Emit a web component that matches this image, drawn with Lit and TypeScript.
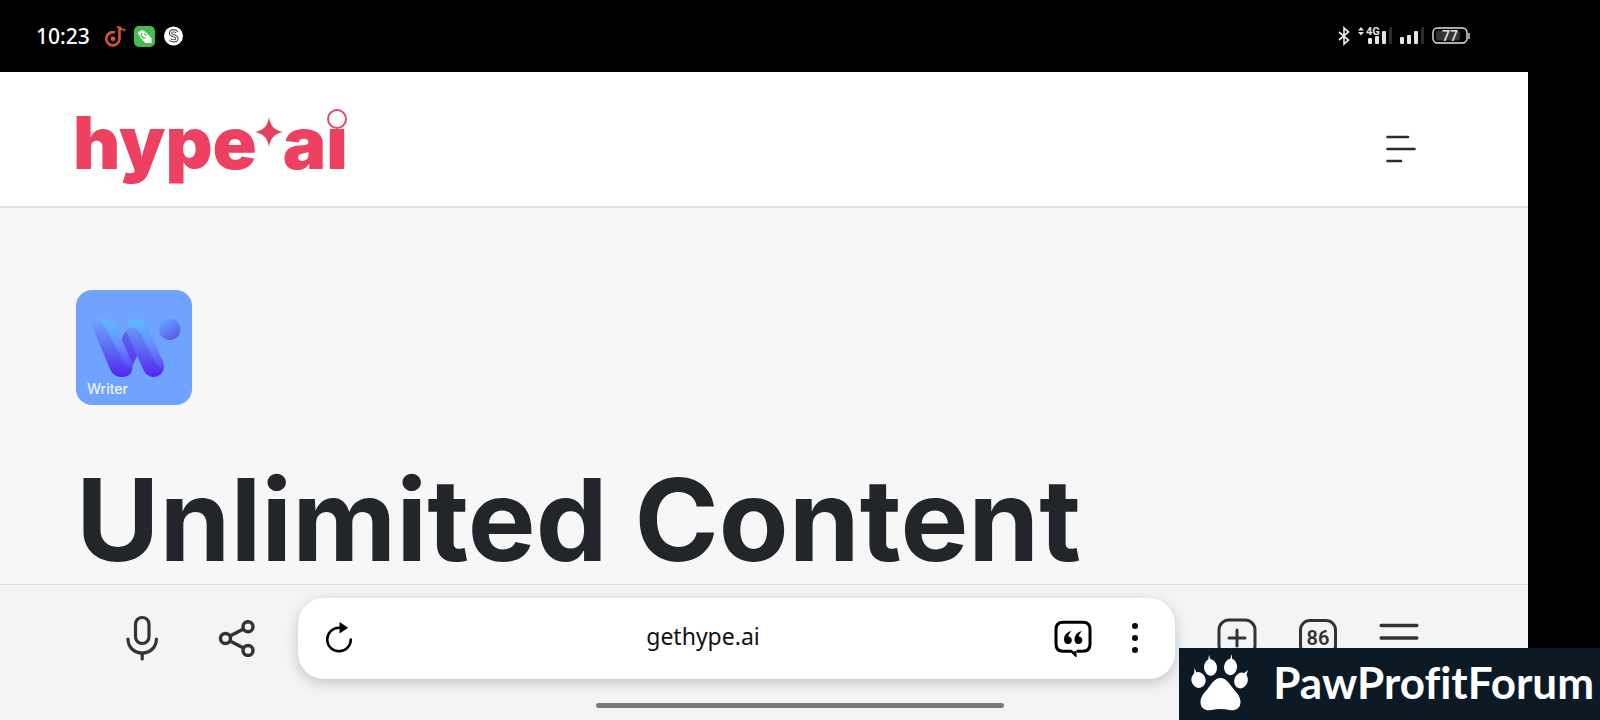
import { LitElement, html, css, svg } from "lit";
import { customElement, property } from "lit/decorators.js";

@customElement("status-bar")
class StatusBar extends LitElement {
  @property() time = "10:23";
  @property({ type: Number }) battery = 77;

  static styles = css`
    :host {
      display: flex;
      align-items: center;
      justify-content: space-between;
      height: 72px;
      padding: 0 57px 0 36px;
      color: #fff;
      background: #000;
      font-family: "Noto Sans", sans-serif;
    }
    .group {
      display: flex;
      align-items: center;
      gap: 8px;
    }
    .time {
      font-size: 21px;
      font-weight: 500;
      line-height: 28px;
      margin-right: 7px;
    }
    svg {
      display: block;
    }
    .net {
      font: 700 11px Roboto, sans-serif;
    }
    .level {
      font: 500 14px Roboto, sans-serif;
    }
  `;

  render() {
    return html`
      <div class="group">
        <time class="time">${this.time}</time>
        <svg width="21" height="22" viewBox="0 0 21 22" aria-hidden="true">
          <path d="M10 7.500A6.600 6.600 0 1 0 14.500 14V3" fill="none" stroke="#d9552f" stroke-width="2.600" />
          <circle cx="8" cy="13.800" r="2.400" fill="#d9552f" />
          <path d="M11 1l5 .8 1 1.700 3.600.7-.6 2.800-1-1.400-4.500-.6z" fill="#d9552f" />
        </svg>
        <svg width="21" height="21" viewBox="0 0 21 21" aria-hidden="true">
          <rect width="21" height="21" rx="5" fill="#46bb50" />
          <path d="M3.500 6.500 8 4l3 1.500 3.500 3.500 3 3.500v4.500h-6l-4.500-4.500z" fill="#fff" />
          <path d="M8 7l-1 2.500 2.500 2.500 2.500-.5M10 7.500l2.500 2" stroke="#46bb50" stroke-width="1.200" fill="none" />
        </svg>
        <svg width="21" height="20" viewBox="0 0 21 20" aria-hidden="true">
          <circle cx="10.500" cy="10" r="9.500" fill="#fff" />
          <path
            d="M14 6.500C12.500 4 7.500 4.200 7.500 7.200c0 3 6.500 2 6.500 5.300 0 3-5.500 3.200-7 .8"
            fill="none" stroke="#222" stroke-width="3" />
          <path
            d="M14.500 6.800C12.500 4 7.500 4.200 7.500 7.200c0 3 6.500 2 6.500 5.300 0 3-5.500 3.200-7.500.5"
            fill="none" stroke="#fff" stroke-width="1.300" />
        </svg>
      </div>
      <div class="group">
        <svg width="12" height="20" viewBox="0 0 12 20" aria-hidden="true">
          <path d="M1 6l9.500 8L6 18V2l4.500 4L1 14" fill="none" stroke="#e4e4e4" stroke-width="1.700" />
        </svg>
        <svg width="34" height="20" viewBox="0 0 34 20" aria-label="4G">
          <path d="M0 4.500l3-3.500 3 3.500zM0 6l3 3.500L6 6z" fill="#e4e4e4" />
          <rect x="10" y="12" width="4" height="6" rx="1" fill="#e4e4e4" />
          <rect x="17" y="10" width="4" height="8" rx="1" fill="#e4e4e4" />
          <rect x="24" y="5" width="4" height="13" rx="1" fill="#e4e4e4" />
          <rect x="31" y="1" width="3" height="17" rx="1" fill="#2c2c2c" />
          <text class="net" x="8" y="9" fill="#e4e4e4">4G</text>
        </svg>
        <svg width="24" height="20" viewBox="0 0 24 20" aria-hidden="true">
          <rect x="0" y="11" width="4" height="7" rx="1" fill="#e4e4e4" />
          <rect x="7" y="9" width="4" height="9" rx="1" fill="#e4e4e4" />
          <rect x="14" y="5" width="4" height="13" rx="1" fill="#e4e4e4" />
          <rect x="21" y="1" width="3" height="17" rx="1" fill="#2c2c2c" />
        </svg>
        <svg width="39" height="18" viewBox="0 0 39 18" aria-label="Battery">
          <rect x="1" y="1" width="34" height="15" rx="4.500" fill="none" stroke="#e4e4e4" stroke-width="1.400" />
          <rect x="4" y="3.500" width="24" height="10" rx="2" fill="#333" />
          <rect x="36" y="6" width="2" height="6" fill="#9a9a9a" />
          <text class="level" x="18" y="13.500" text-anchor="middle" fill="#e4e4e4">${this.battery}</text>
        </svg>
      </div>
    `;
  }
}

@customElement("site-header")
class SiteHeader extends LitElement {
  static styles = css`
    :host {
      display: flex;
      justify-content: space-between;
      align-items: flex-end;
      padding: 33px 112px 26px 73px;
      background: #fff;
      border-bottom: 2px solid #e2e2e2;
    }
    .logo {
      display: flex;
      color: #ee4060;
      text-decoration: none;
      font: 900 73px/75px Inter, sans-serif;
    }
    .star {
      margin: 12px 0 0 -2px;
    }
    .i {
      position: relative;
    }
    .ring {
      position: absolute;
      top: 4px;
      left: 50%;
      width: 16px;
      height: 16px;
      margin-left: -10px;
      border: 2px solid #dc4a66;
      border-radius: 50%;
      background: #fff;
    }
    .menu {
      padding: 16px 0;
      border: 0;
      background: none;
    }
    svg {
      display: block;
    }
  `;

  render() {
    return html`
      <a class="logo" href="#" aria-label="hype ai">
        <span>hype</span>
        <svg class="star" width="28" height="30" viewBox="0 0 28 30" aria-hidden="true">
          <path d="M14 0c1.500 9 5 13 14 15-9 2-12.500 6-14 15-1.500-9-5-13-14-15 9-2 12.500-6 14-15z" fill="#e2405e" />
        </svg>
        <span>a</span><span class="i">i<span class="ring"></span></span>
      </a>
      <button class="menu" aria-label="Menu">
        <svg width="30" height="30" viewBox="0 0 30 30">
          <path d="M1.500 3h20.500M1.500 15h27M1.500 27h13.500" stroke="#2b2b30" stroke-width="2.600" stroke-linecap="round" />
        </svg>
      </button>
    `;
  }
}

@customElement("writer-tile")
class WriterTile extends LitElement {
  static styles = css`
    :host {
      display: block;
    }
    svg {
      display: block;
    }
    .label {
      font: 500 14px Inter, sans-serif;
    }
  `;

  render() {
    return html`
      <svg width="116" height="116" viewBox="0 0 116 116" role="img" aria-label="Writer">
        <defs>
          <linearGradient id="back" x1="0" y1="29" x2="0" y2="87" gradientUnits="userSpaceOnUse">
            <stop offset="0" stop-color="#6ea4fb" />
            <stop offset=".5" stop-color="#5d6cf2" />
            <stop offset="1" stop-color="#5226f0" />
          </linearGradient>
          <linearGradient id="front" x1="0" y1="29" x2="0" y2="80" gradientUnits="userSpaceOnUse">
            <stop offset="0" stop-color="#5cbcfd" />
            <stop offset=".5" stop-color="#6390fb" />
            <stop offset="1" stop-color="#5c42f5" />
          </linearGradient>
          <linearGradient id="fold" x1="0" y1="45" x2="0" y2="87" gradientUnits="userSpaceOnUse">
            <stop offset="0" stop-color="#5865ea" />
            <stop offset="1" stop-color="#5428f0" />
          </linearGradient>
          <linearGradient id="dot" x1="0" y1="0" x2=".7" y2="1">
            <stop offset="0" stop-color="#62aefd" />
            <stop offset="1" stop-color="#5d58ee" />
          </linearGradient>
        </defs>
        <rect width="116" height="115" rx="16" fill="#70a3ff" />
        <path d="M45 76L57 49" stroke="url(#fold)" stroke-width="21" stroke-linecap="round" />
        <path d="M13 29h14c5 0 9 2 11 6l17 38c4 8-1 14-9 14-6 0-10-3-12-8z" fill="url(#back)" />
        <path d="M21 29h7c5 0 9 2 11 6l17 37c1 3 0 5-1 6-3 0-6-3-7-6L29 37c-2-4-4-7-8-8z" fill="url(#front)" />
        <path d="M60.500 39L77.500 76.500" stroke="url(#back)" stroke-width="21" stroke-linecap="round" />
        <path d="M50 40c-1-13 15-15 20-5l17 37c1 3 0 5-2 6-3-1-5-4-6-7L66 46c-3-7-12-11-16-6z" fill="url(#front)" />
        <circle cx="93.700" cy="39.500" r="10.700" fill="url(#dot)" />
        <text class="label" x="11" y="104" fill="#e9f2ff">Writer</text>
      </svg>
    `;
  }
}

@customElement("browser-toolbar")
class BrowserToolbar extends LitElement {
  @property() address = "gethype.ai";
  @property({ type: Number }) tabs = 86;

  static styles = css`
    :host {
      display: block;
      padding: 13px 0 12px;
      border-top: 1px solid #dedede;
      background: #f4f4f4;
    }
    .row {
      display: flex;
      align-items: center;
      padding: 0 99px 0 112px;
    }
    .left,
    .right {
      display: flex;
      align-items: center;
      gap: 34px;
    }
    .right {
      gap: 21px;
    }
    button {
      display: grid;
      place-items: center;
      width: 60px;
      height: 60px;
      padding: 0 0 2px;
      border: 0;
      background: none;
      color: #333;
    }
    svg {
      display: block;
    }
    .bar {
      flex: 1;
      display: flex;
      align-items: center;
      height: 81px;
      box-sizing: border-box;
      margin: 0 32px;
      padding: 0 16px 0 23px;
      border-radius: 26px;
      background: #fff;
      box-shadow: 0 4px 14px rgba(0, 0, 0, 0.2);
    }
    .bar button {
      width: 48px;
      color: #000;
    }
    .bar .reload {
      width: 36px;
    }
    .bar .more {
      margin-left: 14px;
    }
    .url {
      flex: 1;
      min-width: 0;
      padding: 0 0 5px;
      border: 0;
      outline: 0;
      background: none;
      text-align: center;
      color: #111;
      font: 23px/32px "Noto Sans", sans-serif;
    }
    .count {
      display: grid;
      place-items: center;
      width: 32px;
      height: 32px;
      border: 3px solid #333;
      border-radius: 11px;
      font: 600 20px/32px Roboto, sans-serif;
    }
    .home {
      width: 408px;
      height: 5px;
      border-radius: 3px;
      background: #7a7a7a;
    }
    .gesture {
      display: flex;
      justify-content: center;
      padding: 24px 0 0 72px;
    }
  `;

  render() {
    const quote = (x: number) => svg`
      <path transform="translate(${x} 0)"
        d="M7.500 0C3 1 0 4 0 8.500 0 11.500 1.600 13 4 13s3.800-1.600 3.800-3.800S6.300 5.500 4.300 5.500C4.500 3.500 6 1.500 7.500 0z" />`;
    return html`
      <div class="row">
        <div class="left">
          <button aria-label="Voice search">
            <svg width="32" height="46" viewBox="0 0 32 46" fill="none" stroke="currentColor" stroke-width="3.200" stroke-linecap="round">
              <rect x="9.500" y="2.500" width="13.500" height="26" rx="6.700" />
              <path d="M2 24c0 8 6 14 14.200 14s14.200-6 14.200-14M16.200 38v6" />
            </svg>
          </button>
          <button aria-label="Share">
            <svg width="38" height="38" viewBox="0 0 38 38" fill="none" stroke="currentColor" stroke-width="3.500">
              <circle cx="8.500" cy="19.500" r="5" />
              <circle cx="31" cy="7.700" r="5" />
              <circle cx="31" cy="31.500" r="5" />
              <path d="M13 17l13.500-7M13 22l13.500 7" />
            </svg>
          </button>
        </div>
        <div class="bar">
          <button class="reload" aria-label="Reload">
            <svg width="30" height="34" viewBox="0 0 30 34">
              <path d="M15 6.700a11.800 11.800 0 1 0 11.800 11.800" fill="none" stroke="currentColor" stroke-width="2.500" stroke-linecap="round" />
              <path d="M15.500 1.800q0-.8.800-.3l7.200 4.800q.6.500 0 1l-7.200 4.800q-.8.400-.8-.4z" fill="currentColor" />
            </svg>
          </button>
          <input class="url" type="text" aria-label="Address" .value=${this.address} />
          <button aria-label="Reader">
            <svg width="40" height="38" viewBox="0 0 40 38">
              <path d="M18.500 32.200H10Q3 32.200 3 25V10.500Q3 3.300 10 3.300h20q7 0 7 7.200V25q0 7.200-7 7.200h-6.500" fill="none" stroke="currentColor" stroke-width="3" />
              <path d="M16.500 31.500h2.500l2.500 2.500v-1.500h1.500v5.500z" fill="currentColor" stroke="currentColor" stroke-width="1" />
              <g transform="translate(11 12)" fill="currentColor">${quote(0)}${quote(10.500)}</g>
            </svg>
          </button>
          <button class="more" aria-label="More">
            <svg width="8" height="32" viewBox="0 0 8 32" fill="currentColor">
              <circle cx="4" cy="4" r="3" /><circle cx="4" cy="16" r="3" /><circle cx="4" cy="28" r="3" />
            </svg>
          </button>
        </div>
        <div class="right">
          <button aria-label="New tab">
            <svg width="40" height="40" viewBox="0 0 40 40" fill="none" stroke="currentColor" stroke-width="3" stroke-linecap="round">
              <rect x="2" y="2" width="36" height="36" rx="10" />
              <path d="M20 12v16M12 20h16" />
            </svg>
          </button>
          <button aria-label="Open tabs"><span class="count">${this.tabs}</span></button>
          <button aria-label="Browser menu">
            <svg width="40" height="30" viewBox="0 0 40 30" stroke="currentColor" stroke-width="3.500" stroke-linecap="round">
              <path d="M2.200 2.500h35.600M2.200 15h35.600M2.200 27.500h35.600" />
            </svg>
          </button>
        </div>
      </div>
      <div class="gesture"><div class="home"></div></div>
    `;
  }
}

@customElement("forum-badge")
class ForumBadge extends LitElement {
  static styles = css`
    :host {
      display: flex;
      align-items: center;
      gap: 24px;
      height: 72px;
      box-sizing: border-box;
      padding: 0 6px 4px 12px;
      background: #0c1a26;
      color: #fff;
      font: 700 44px/56px Lato, sans-serif;
      font-variant-ligatures: none;
    }
    svg {
      display: block;
    }
  `;

  render() {
    return html`
      <svg width="58" height="58" viewBox="0 0 58 58" fill="#fff" aria-hidden="true">
        <path d="M29.500 25c6 0 9 6 13 11 4 4.500 7 8 7 13 0 7-6 9-11 8-6-1.500-12-1.500-18 0-5 1-11-1-11-8 0-5 3-8.500 7-13 4-5 7-11 13-11z" />
        <ellipse cx="7.500" cy="27" rx="7" ry="8" transform="rotate(-18 7.500 27)" />
        <ellipse cx="19.500" cy="14.500" rx="6.500" ry="8.300" transform="rotate(-6 19.500 14.500)" />
        <ellipse cx="39.500" cy="14" rx="6.500" ry="8.300" transform="rotate(6 39.500 14)" />
        <ellipse cx="50" cy="27.500" rx="6.700" ry="8" transform="rotate(18 50 27.500)" />
        <path d="M3 22l.5-7 3 7zM17 8l1-6 2 6zM39 7l1.500-6 1 7zM52 21l5-4-2 6z" />
      </svg>
      <span>PawProfitForum</span>
    `;
  }
}

@customElement("app-root")
class AppRoot extends LitElement {
  static styles = css`
    :host {
      display: block;
      position: relative;
      height: 100vh;
      overflow: hidden;
      background: #000;
    }
    .screen {
      display: flex;
      flex-direction: column;
      height: 100%;
      box-sizing: border-box;
      padding-right: 72px;
    }
    .content {
      flex: 1;
      min-height: 0;
      padding: 82px 76px 0;
      background: #f7f7f7;
    }
    h1 {
      margin: 58px 0 0;
      white-space: nowrap;
      color: #22262a;
      font: 700 114px/112px Inter, sans-serif;
    }
    .badge {
      position: absolute;
      right: 0;
      bottom: 0;
    }
  `;

  render() {
    return html`
      <div class="screen">
        <status-bar></status-bar>
        <site-header></site-header>
        <main class="content">
          <writer-tile></writer-tile>
          <h1>Unlimited Content</h1>
        </main>
        <browser-toolbar></browser-toolbar>
      </div>
      <forum-badge class="badge"></forum-badge>
    `;
  }
}
